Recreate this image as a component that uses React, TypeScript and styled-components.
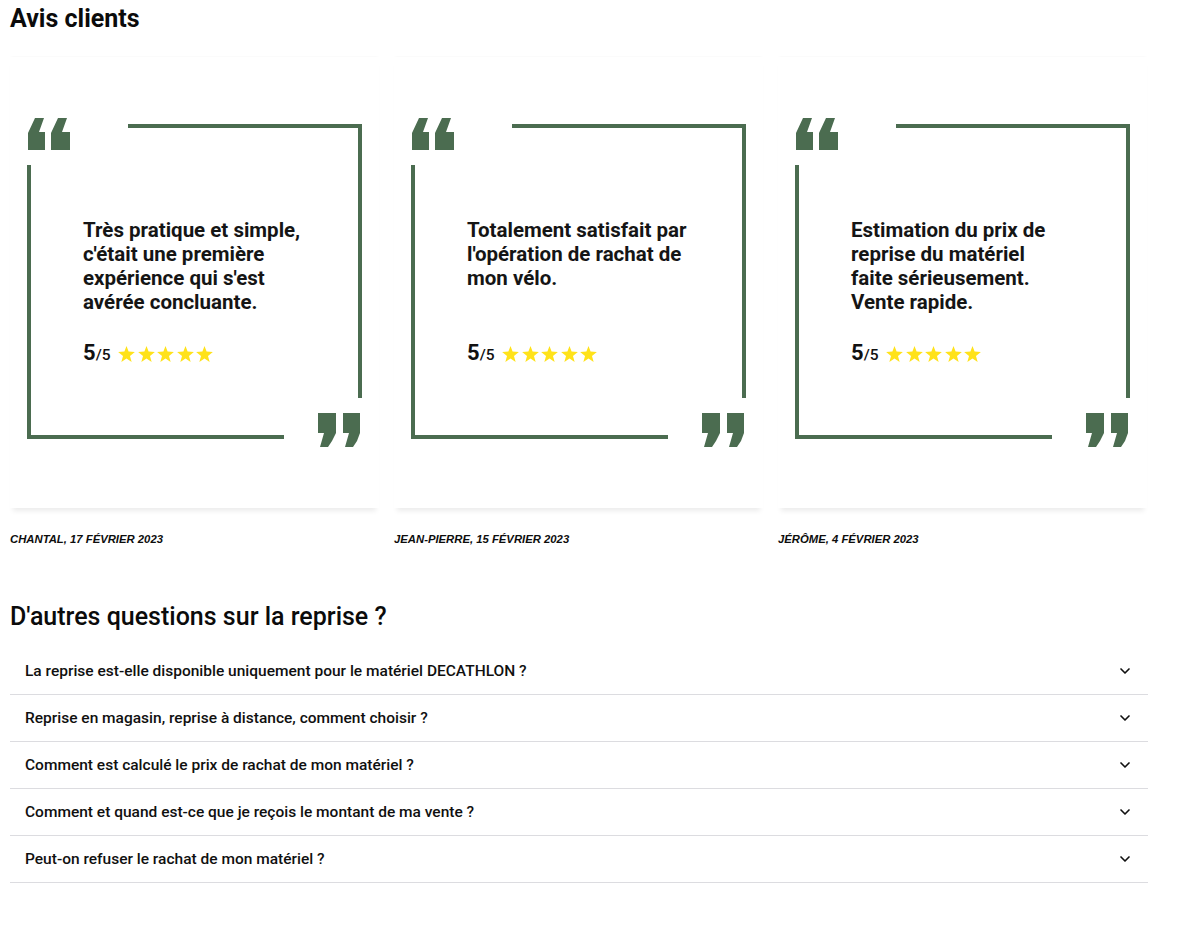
import styled, { createGlobalStyle } from 'styled-components';
import { FiChevronDown } from 'react-icons/fi';

interface Review {
  text: string[];
  author: string;
}

const reviews: Review[] = [
  {
    text: [
      'Très pratique et simple,',
      "c'était une première",
      "expérience qui s'est",
      'avérée concluante.',
    ],
    author: 'Chantal, 17 février 2023',
  },
  {
    text: ['Totalement satisfait par', "l'opération de rachat de", 'mon vélo.'],
    author: 'Jean-Pierre, 15 février 2023',
  },
  {
    text: [
      'Estimation du prix de',
      'reprise du matériel',
      'faite sérieusement.',
      'Vente rapide.',
    ],
    author: 'Jérôme, 4 février 2023',
  },
];

const questions = [
  'La reprise est-elle disponible uniquement pour le matériel DECATHLON ?',
  'Reprise en magasin, reprise à distance, comment choisir ?',
  'Comment est calculé le prix de rachat de mon matériel ?',
  'Comment et quand est-ce que je reçois le montant de ma vente ?',
  'Peut-on refuser le rachat de mon matériel ?',
];

const GREEN = '#4b6c50';

// cadre vert + guillemets, dessin de fond de la carte
const Frame = () => (
  <FrameSvg viewBox="0 0 369 451" width="369" height="451">
    <g fill={GREEN}>
      <polygon points="25,61 34,61 29,75 35,75 35,93 18,93 18,76" />
      <polygon points="48,61 57,61 52,75 60,75 60,93 41,93 41,76" />
      <rect x="118" y="67" width="234" height="4" />
      <rect x="348" y="67" width="4" height="274" />
      <rect x="17" y="108" width="4" height="274" />
      <rect x="17" y="378" width="257" height="4" />
      <polygon points="308,356 326,356 326,376 322,384 318,390 310,390 314,376 308,376" />
      <polygon points="333,356 350,356 350,376 347,384 343,390 335,390 339,376 333,376" />
    </g>
  </FrameSvg>
);

const Star = () => (
  <svg width="17" height="16" viewBox="0 0 24 23">
    <polygon
      fill="#ffe21a"
      points="12,0 15,8 24,8.6 17,14.2 19.4,23 12,18 4.6,23 7,14.2 0,8.6 9,8"
    />
  </svg>
);

const ReviewCard = ({ review }: { review: Review }) => (
  <Column>
    <Card>
      <Frame />
      <Quote>
        {review.text.map(line => (
          <div key={line}>{line}</div>
        ))}
      </Quote>
      <Rating>
        <Score>
          5<small>/5</small>
        </Score>
        <Stars>
          {[0, 1, 2, 3, 4].map(i => (
            <Star key={i} />
          ))}
        </Stars>
      </Rating>
    </Card>
    <Author>{review.author}</Author>
  </Column>
);

const App = () => {
  return (
    <>
      <GlobalStyle />
      <Page>
        <Title>Avis clients</Title>
        <Reviews>
          {reviews.map(r => (
            <ReviewCard key={r.author} review={r} />
          ))}
        </Reviews>
        <FaqTitle>D'autres questions sur la reprise ?</FaqTitle>
        <FaqList>
          {questions.map(q => (
            <FaqItem key={q}>
              <span>{q}</span>
              <FiChevronDown />
            </FaqItem>
          ))}
        </FaqList>
      </Page>
    </>
  );
};

export default App;

const GlobalStyle = createGlobalStyle`
  body {
    margin: 0;
    background: #fff;
    font-family: Roboto, "Liberation Sans", sans-serif;
    color: #101010;
  }
`;

const Page = styled.div`
  width: 1138px;
  padding: 0 10px;
`;

const Title = styled.h2`
  margin: 0;
  padding-top: 5px;
  font-size: 25px;
  line-height: 28px;
  font-weight: 700;
  color: #0b0b0b;
`;

const Reviews = styled.div`
  display: grid;
  grid-template-columns: repeat(3, 369px);
  column-gap: 15px;
  margin-top: 24px;
`;

const Column = styled.div`
  display: flex;
  flex-direction: column;
`;

const Card = styled.div`
  position: relative;
  height: 451px;
  box-sizing: border-box;
  padding: 161px 0 0 73px;
  background: #fff;
  box-shadow: 0 6px 5px -3px rgba(0, 0, 0, 0.08), 0 -1px 2px -1px rgba(0, 0, 0, 0.05);
`;

const FrameSvg = styled.svg`
  position: absolute;
  left: 0;
  top: 0;
`;

const Quote = styled.div`
  position: relative;
  height: 96px;
  font-size: 20.5px;
  line-height: 24px;
  font-weight: 700;
  color: #151515;
`;

const Rating = styled.div`
  position: relative;
  display: flex;
  align-items: center;
  gap: 8px;
  margin-top: 26px;
`;

const Score = styled.div`
  font-size: 22px;
  font-weight: 700;
  color: #111;

  small {
    font-size: 15.5px;
    font-weight: 500;
  }
`;

const Stars = styled.div`
  display: flex;
  gap: 2.5px;
  padding-top: 2px;
`;

const Author = styled.div`
  margin-top: 25px;
  font-family: "Liberation Sans", Arial, sans-serif;
  font-size: 11.3px;
  font-weight: 700;
  font-style: italic;
  text-transform: uppercase;
  color: #0d0d0d;
`;

const FaqTitle = styled.h2`
  margin: 57px 0 0;
  font-size: 25px;
  line-height: 30px;
  font-weight: 500;
  color: #0b0b0b;
`;

const FaqList = styled.ul`
  list-style: none;
  margin: 16px 0 0;
  padding: 0;
`;

const FaqItem = styled.li`
  display: flex;
  align-items: center;
  justify-content: space-between;
  height: 46px;
  padding: 0 15px 0 15px;
  border-bottom: 1px solid #dcdce0;
  font-size: 15.5px;
  font-weight: 500;
  color: #101010;

  svg {
    width: 16px;
    height: 16px;
    stroke-width: 2.5;
  }
`;
